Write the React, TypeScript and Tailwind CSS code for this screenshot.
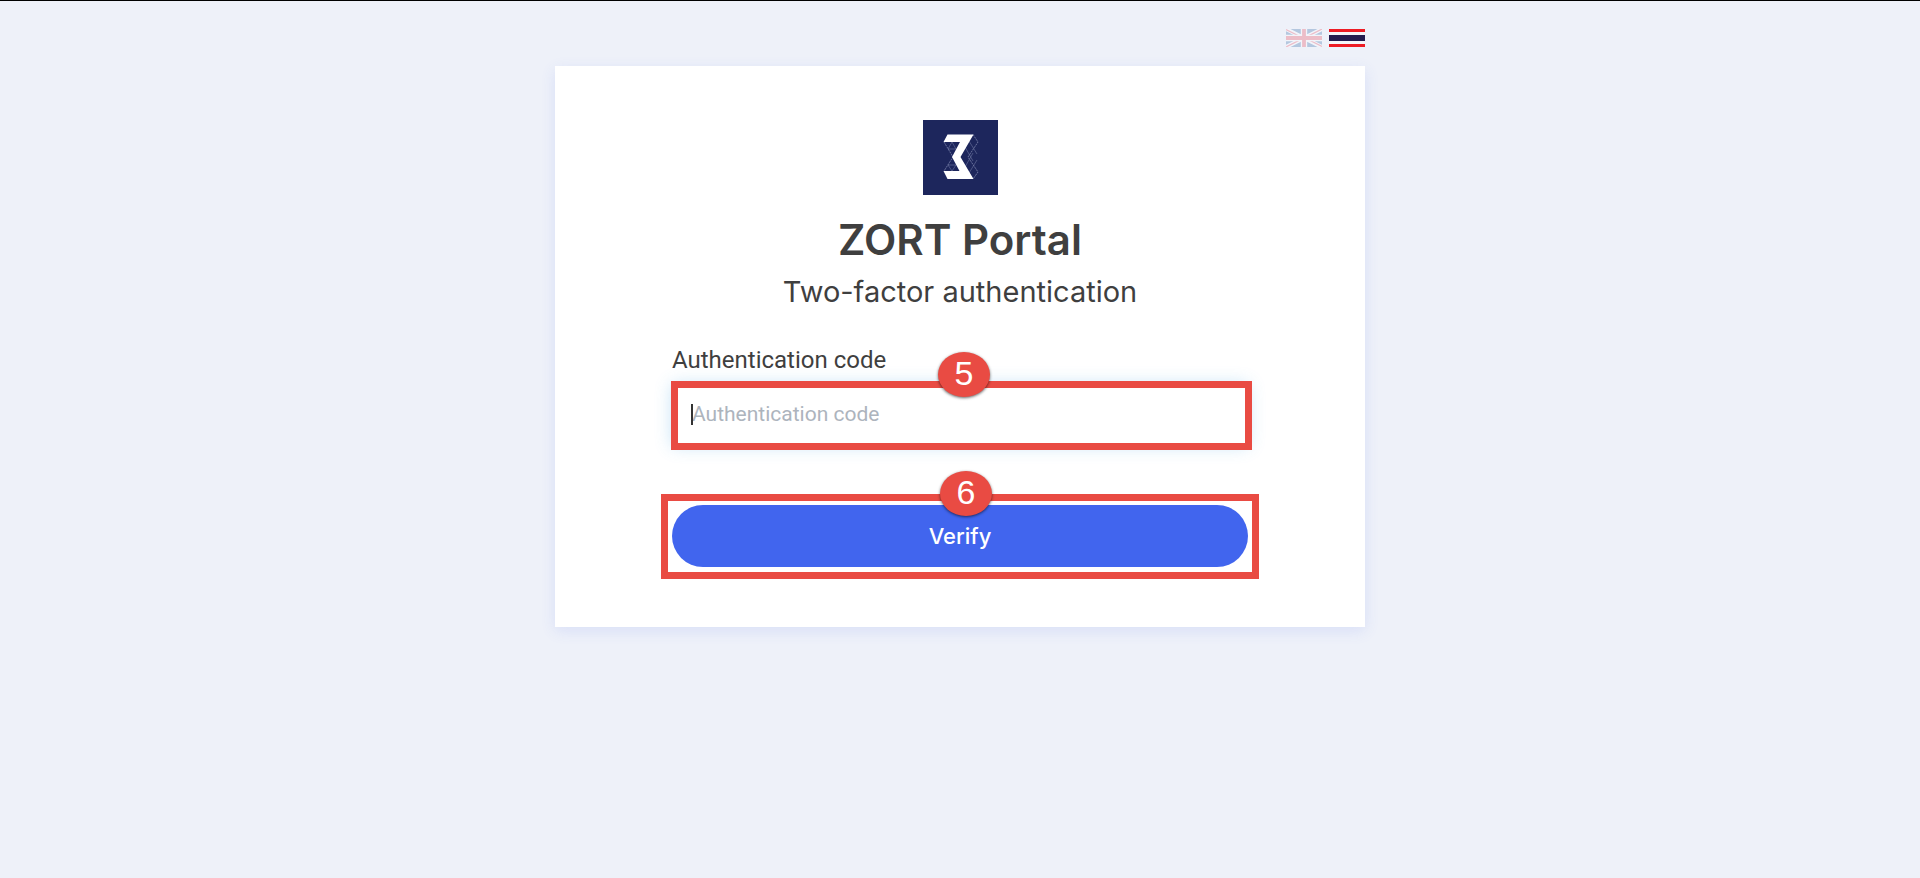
import React from 'react';

interface CalloutProps {
  step: number;
  className: string;
  badgeClassName: string;
}

// red frame with a numbered badge on its top edge
const Callout: React.FC<CalloutProps> = ({ step, className, badgeClassName }) => (
  <div className={`pointer-events-none absolute border-[7px] border-[#e94b43] ${className}`}>
    <span
      className={`absolute flex h-[45px] w-[52px] items-center justify-center rounded-[50%] bg-[#e94b43] pb-1 font-['Liberation_Sans',sans-serif] text-[34px] leading-none text-white shadow-[0_1px_3px_rgba(0,0,0,0.6)] ${badgeClassName}`}
    >
      {step}
    </span>
  </div>
);

const UkFlag = () => (
  <svg viewBox="0 0 36 18" className="h-[18px] w-9" aria-hidden="true">
    <rect width="36" height="18" fill="#0a4f96" />
    <path d="M0 0L36 18M36 0L0 18" stroke="#fff" strokeWidth="4" />
    <path d="M0 0.6L17 9M36 17.4L19 9M36 0L19 8.6M0 18L17 9.4" stroke="#e8253a" strokeWidth="1.2" />
    <path d="M18 0V18M0 9H36" stroke="#fff" strokeWidth="6.4" />
    <path d="M18 0V18M0 9H36" stroke="#e8253a" strokeWidth="3.8" />
  </svg>
);

const ThaiFlag = () => (
  <svg viewBox="0 0 36 18" className="h-[18px] w-9" aria-hidden="true">
    <rect width="36" height="18" fill="#f4f5f8" />
    <path d="M0 0H36V3H0zM0 15H36V18H0z" fill="#ed1c24" />
    <path d="M0 6H36V12H0z" fill="#241d4f" />
  </svg>
);

const Logo = () => (
  <svg viewBox="0 0 75 75" className="size-[75px]" role="img" aria-label="ZORT">
    <rect width="75" height="75" fill="#1d265c" />
    <g fill="none" stroke="#7d85ad" strokeWidth="0.5">
      <path d="M50 14.5L55 22L45 37L55 52L50 59" strokeWidth="0.8" strokeDasharray="2 0.8" />
      <path d="M42 27L50 41M46 21L54 34M42 47L50 33M46 53L54 40" />
      <path d="M21 22L30 37L21 51" strokeWidth="0.8" strokeDasharray="2 0.8" />
      <path d="M29 22L33 29H25L29 22M29 51L33 45H25L29 51" />
    </g>
    <path d="M24.5 14.5H50.5L37.5 37L50.5 59H24.5L20.5 51H36.5L29 37L37 22H20.5z" fill="#fff" />
  </svg>
);

export default function App() {
  return (
    <div className="min-h-screen border-t border-black bg-[#eef1f9] font-[Roboto,sans-serif] text-[#3f3f3f]">
      <main className="mx-auto w-full max-w-[810px] pt-7">
        <nav className="flex justify-end gap-[7px]" aria-label="Language">
          <button type="button" aria-label="English" className="opacity-25">
            <UkFlag />
          </button>
          <button type="button" aria-label="ภาษาไทย">
            <ThaiFlag />
          </button>
        </nav>

        <section className="mt-[19px] bg-white px-[117px] pt-[54px] pb-[60px] shadow-[0_4px_14px_rgba(65,101,238,0.12)]">
          <header className="flex flex-col items-center text-center font-[Inter,sans-serif]">
            <Logo />
            <h1 className="mt-[17px] text-[42px] leading-[56px] font-semibold">ZORT Portal</h1>
            <h2 className="mt-[6px] text-[29px] leading-9">Two-factor authentication</h2>
          </header>

          <form className="mt-[34px]" onSubmit={(e) => e.preventDefault()}>
            <label htmlFor="code" className="block text-[24px] leading-8">
              Authentication code
            </label>
            <div className="relative mt-2">
              <input
                id="code"
                type="text"
                placeholder="Authentication code"
                className="block h-[62px] w-full bg-white px-5 pb-0.5 text-[21px] shadow-[0_0_16px_rgba(60,160,230,0.3)] outline-none placeholder:text-[#adb4bd]"
              />
              <span className="absolute top-5 left-[19px] h-[21px] w-0.5 bg-[#333]" />
              <Callout step={5} className="-top-[3px] -right-1 -bottom-1 -left-px" badgeClassName="-top-9 left-[260px]" />
            </div>

            <div className="relative mt-[59px]">
              <button
                type="submit"
                className="block h-[62px] w-full rounded-full bg-[#4165ee] font-[Inter,sans-serif] text-[22px] font-medium text-white"
              >
                Verify
              </button>
              <Callout step={6} className="-inset-x-[11px] -top-[11px] -bottom-3" badgeClassName="-top-[30px] left-[272px]" />
            </div>
          </form>
        </section>
      </main>
    </div>
  );
}
